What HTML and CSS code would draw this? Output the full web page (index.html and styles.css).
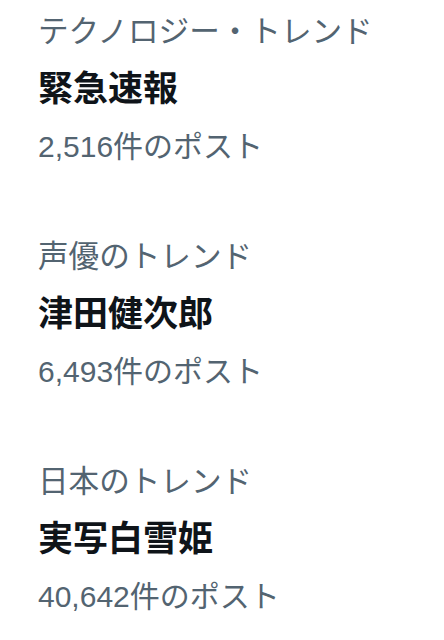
FILE: index.html
```html
<!DOCTYPE html>
<html lang="ja">
<head>
    <meta charset="UTF-8">
    <title>トレンド</title>
    <link rel="stylesheet" href="styles.css">
</head>
<body>
    <div class="trends">
        <div class="trend">
            <div class="trend-context">テクノロジー・トレンド</div>
            <div class="trend-name">緊急速報</div>
            <div class="trend-count">2,516件のポスト</div>
        </div>
        <div class="trend">
            <div class="trend-context">声優のトレンド</div>
            <div class="trend-name">津田健次郎</div>
            <div class="trend-count">6,493件のポスト</div>
        </div>
        <div class="trend">
            <div class="trend-context">日本のトレンド</div>
            <div class="trend-name">実写白雪姫</div>
            <div class="trend-count">40,642件のポスト</div>
        </div>
    </div>
</body>
</html>
```

FILE: styles.css
```css
body {
    font-family: "Liberation Sans", "Noto Sans CJK JP", sans-serif;
    background-color: #fff;
    margin: 0;
}
.trends {
    display: flex;
    flex-direction: column;
    gap: 51px;
    padding: 2px 0 0 38px;
}
.trend-context, .trend-count {
    font-size: 30px;
    line-height: 58px;
    color: #536471;
}
.trend-context {
    font-size: 30.6px;
}
.trend-name {
    font-size: 35px;
    line-height: 58px;
    font-weight: 600;
    color: #0f1419;
}
```
